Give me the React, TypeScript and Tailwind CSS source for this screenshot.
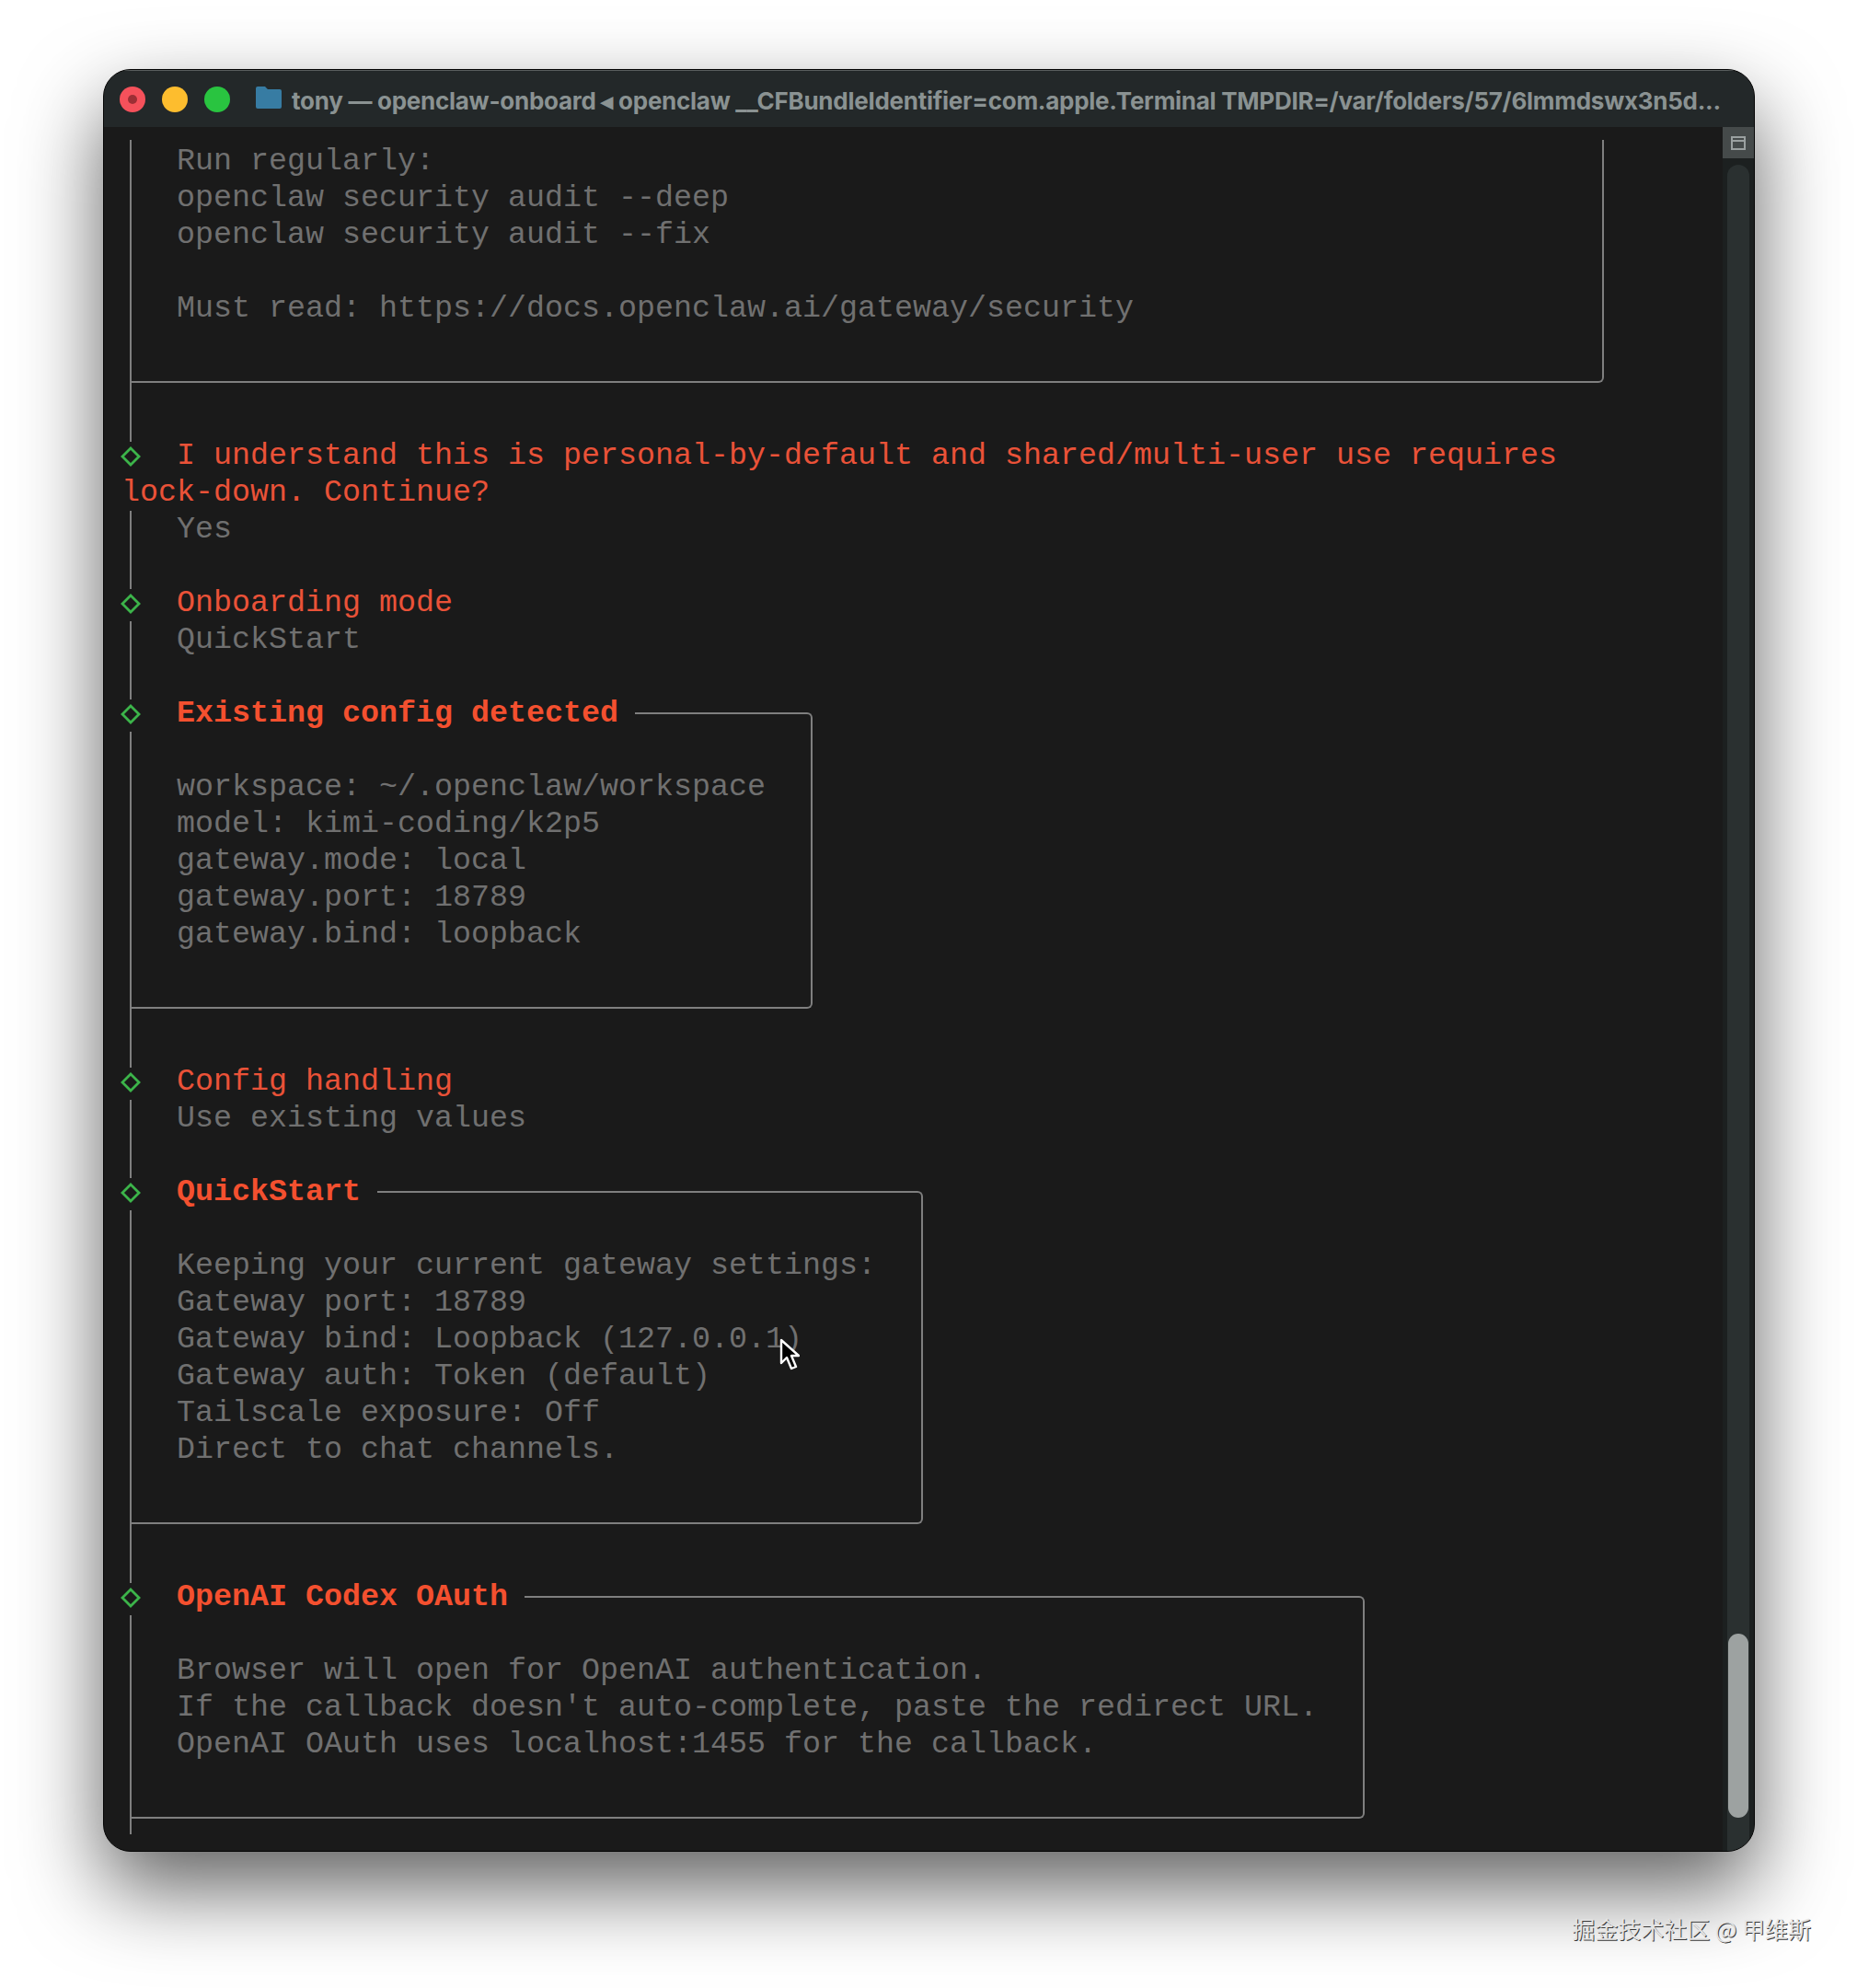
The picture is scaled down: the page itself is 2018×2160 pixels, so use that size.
const BODY_FONT = "font-['Liberation_Mono','DejaVu_Sans_Mono',monospace]";

function Diamond() {
  return (
    <svg width="22" height="22" viewBox="0 0 22 22" fill="none" className="-ml-px mt-[10px] shrink-0">
      <path d="M11 2 L20 11 L11 20 L2 11 Z" stroke="#3cb44a" strokeWidth="2.8" />
    </svg>
  );
}

function Answer({ title, value }: { title: string; value: string }) {
  return (
    <>
      <div className="flex h-10">
        <div className="w-[60px]">
          <Diamond />
        </div>
        <span className="text-[#ea5238]">{title}</span>
      </div>
      <div className="flex h-20 items-start">
        <div className="ml-[9px] h-[85px] w-[2px] shrink-0 bg-[#7f7f7f]" />
        <span className="ml-[49px] text-[#707070]">{value}</span>
      </div>
    </>
  );
}

function Connector() {
  return (
    <div className="h-[59px]">
      <div className="ml-[9px] h-[64px] w-[2px] bg-[#7f7f7f]" />
    </div>
  );
}

function BoxBody({ lines, blankTop = true }: { lines: string[]; blankTop?: boolean }) {
  return (
    <div
      className={`ml-[9px] rounded-br-[6px] border-b-2 border-l-2 border-r-2 border-[#7f7f7f] pb-[59px] pl-[49px] text-[#707070] ${
        blankTop ? "pt-10" : "pt-[3px]"
      }`}
    >
      {lines.map((line) => (
        <div key={line} className="h-10">
          {line}
        </div>
      ))}
    </div>
  );
}

function Box({ title, width, lines }: { title: string; width: string; lines: string[] }) {
  return (
    <div className={width}>
      <div className="flex h-10">
        <div className="w-[60px] shrink-0">
          <Diamond />
        </div>
        <span className="font-bold text-[#f4502f]">{title}</span>
        <div className="ml-[18px] mt-[19px] h-[21px] flex-1 rounded-tr-[6px] border-r-2 border-t-2 border-[#7f7f7f]" />
      </div>
      <BoxBody lines={lines} />
    </div>
  );
}

function Terminal() {
  return (
    <div className={`h-[1874px] flex-1 overflow-hidden pl-[19px] pt-[14px] text-[33.33px] leading-10 whitespace-pre ${BODY_FONT}`}>
      <div className="w-[1611px]">
        <BoxBody
          blankTop={false}
          lines={[
            "Run regularly:",
            "openclaw security audit --deep",
            "openclaw security audit --fix",
            " ",
            "Must read: https://docs.openclaw.ai/gateway/security",
          ]}
        />
      </div>
      <Connector />

      <div className="flex h-10">
        <div className="w-[60px]">
          <Diamond />
        </div>
        <span className="text-[#ea5238]">I understand this is personal-by-default and shared/multi-user use requires</span>
      </div>
      <div className="h-10 text-[#ea5238]">lock-down. Continue?</div>
      <div className="flex h-20 items-start">
        <div className="ml-[9px] h-[85px] w-[2px] shrink-0 bg-[#7f7f7f]" />
        <span className="ml-[49px] text-[#707070]">Yes</span>
      </div>

      <Answer title="Onboarding mode" value="QuickStart" />

      <Box
        title="Existing config detected"
        width="w-[751px]"
        lines={[
          "workspace: ~/.openclaw/workspace",
          "model: kimi-coding/k2p5",
          "gateway.mode: local",
          "gateway.port: 18789",
          "gateway.bind: loopback",
        ]}
      />
      <Connector />

      <Answer title="Config handling" value="Use existing values" />

      <Box
        title="QuickStart"
        width="w-[871px]"
        lines={[
          "Keeping your current gateway settings:",
          "Gateway port: 18789",
          "Gateway bind: Loopback (127.0.0.1)",
          "Gateway auth: Token (default)",
          "Tailscale exposure: Off",
          "Direct to chat channels.",
        ]}
      />
      <Connector />

      <Box
        title="OpenAI Codex OAuth"
        width="w-[1351px]"
        lines={[
          "Browser will open for OpenAI authentication.",
          "If the callback doesn't auto-complete, paste the redirect URL.",
          "OpenAI OAuth uses localhost:1455 for the callback.",
        ]}
      />
      <div className="ml-[9px] h-[17px] w-[2px] bg-[#7f7f7f]" />
    </div>
  );
}

function ScrollColumn() {
  return (
    <div className="flex w-[34px] shrink-0 flex-col bg-[#1c2020]">
      <div className="flex h-[34px] items-center justify-center bg-[#454a4a]">
        <div className="flex h-[15px] w-[16px] flex-col border-2 border-[#9aa0a0]">
          <div className="h-[4px] border-b-2 border-[#9aa0a0]" />
        </div>
      </div>
      <div className="mx-[5px] mt-[7px] flex flex-1 flex-col justify-end rounded-t-full bg-[#2a3030] pb-[37px]">
        <div className="mx-px h-[200px] rounded-full bg-[#9da2a1]" />
      </div>
    </div>
  );
}

export default function App() {
  return (
    <div className="relative h-[2160px] w-[2018px] overflow-hidden bg-white pl-[112px] pt-[75px]">
      <div className="h-[1937px] w-[1795px] overflow-hidden rounded-[30px] border border-[#050505] bg-[#1a1a1a] shadow-[0_40px_90px_rgba(0,0,0,0.62)]">
        <div className="flex h-[62px] items-center border-t border-[#5a5e5e] bg-[#232829] pl-[17px]">
          <span className="h-7 w-7 rounded-full bg-[#f5515b] p-[9px]">
            <span className="block h-[10px] w-[10px] rounded-full bg-[#9c2f35]" />
          </span>
          <span className="ml-[18px] h-7 w-7 rounded-full bg-[#fdbd2e]" />
          <span className="ml-[18px] h-7 w-7 rounded-full bg-[#29c440]" />
          <svg width="28" height="24" viewBox="0 0 28 24" className="ml-[28px] mb-[4px] shrink-0">
            <path d="M0 2 Q0 0 2 0 H10 L13 3 H26 Q28 3 28 5 V22 Q28 24 26 24 H2 Q0 24 0 22 Z" fill="#377ca3" />
          </svg>
          <span className="ml-[11px] mt-[3px] font-['Inter',sans-serif] text-[26px] font-bold tracking-[-0.27px] whitespace-nowrap text-[#8a9292]">
            tony — openclaw-onboard ◂ openclaw __CFBundleIdentifier=com.apple.Terminal TMPDIR=/var/folders/57/6lmmdswx3n5d...
          </span>
        </div>
        <div className="flex">
          <Terminal />
          <ScrollColumn />
        </div>
      </div>

      <svg width="22" height="36" viewBox="0 0 22 36" className="absolute left-[847px] top-[1454px]">
        <path d="M2 2 V27 L8 21 L13 33 L18 31 L13 19 H21 Z" fill="#000" stroke="#fff" strokeWidth="2.4" strokeLinejoin="round" />
      </svg>

      <div className="mt-[71px] flex justify-end pr-[50px] font-['Noto_Sans_CJK_SC',sans-serif] text-[25px] leading-none text-[#e4e4e4] [text-shadow:1px_1px_0_#3a3a3a]">
        掘金技术社区 @ 甲维斯
      </div>
    </div>
  );
}
